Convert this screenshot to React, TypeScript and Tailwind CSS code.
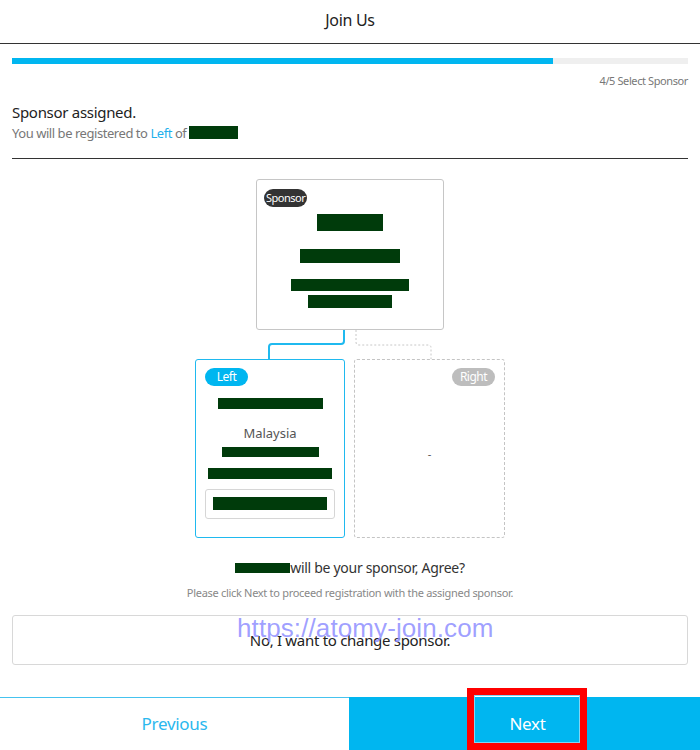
import { FC, ReactNode } from "react";

const Redact: FC<{ className: string }> = ({ className }) => (
  <div className={`bg-[#003b0b] ${className}`} />
);

const Badge: FC<{ color: string; children: ReactNode }> = ({ color, children }) => (
  <span
    className={`flex h-[18px] min-w-[43px] items-center justify-center rounded-full px-[2px] leading-none tracking-[-0.5px] text-white ${color}`}
  >
    {children}
  </span>
);

const Connectors: FC = () => (
  <svg width="308" height="29" viewBox="0 0 308 29" className="block">
    <path
      d="M148 0 V11 Q148 14 145 14 H76 Q73 14 73 17 V29"
      fill="none"
      stroke="#1fb9ef"
      strokeWidth="2"
    />
    <path
      d="M160 0 V12 Q160 15 163 15 H232 Q235 15 235 18 V29"
      fill="none"
      stroke="#c8c8c8"
      strokeWidth="1"
      strokeDasharray="2 2"
    />
  </svg>
);

export default function App() {
  return (
    <div className="relative flex h-[750px] w-[700px] flex-col bg-white font-['Noto_Sans',sans-serif] text-[#222]">
      <header className="flex h-[44px] shrink-0 items-center justify-center border-b border-[#333] pb-[4px]">
        <h1 className="text-[16px] tracking-[-0.3px]">Join Us</h1>
      </header>

      <main className="flex flex-1 flex-col px-3">
        <div className="mt-[14px] h-[6px] w-full bg-[#efefef]">
          <div className="h-full w-[80%] bg-[#00b6f0]" />
        </div>
        <p className="mt-[9px] text-right text-[11px] tracking-[-0.4px] text-[#777]">
          4/5 Select Sponsor
        </p>

        <h2 className="mt-[12px] text-[15px] leading-[20px] tracking-[-0.3px]">Sponsor assigned.</h2>
        <p className="flex items-center text-[13px] leading-[22px] tracking-[-0.45px] text-[#777]">
          You will be registered to&nbsp;<span className="text-[#1fb0ec]">Left</span>&nbsp;of&nbsp;
          <Redact className="h-[13px] w-[49px]" />
        </p>

        <div className="mt-[14px] h-px w-full bg-[#333]" />

        <div className="mt-[20px] flex flex-col items-center">
          <div className="flex h-[151px] w-[188px] flex-col items-center rounded-[3px] border border-[#c6c6c6] px-[7px] pt-[9px]">
            <div className="self-start text-[11px]">
              <Badge color="bg-[#333]">Sponsor</Badge>
            </div>
            <Redact className="mt-[7px] h-[17px] w-[66px]" />
            <Redact className="mt-[18px] h-[14px] w-[100px]" />
            <Redact className="mt-[16px] h-[12px] w-[118px]" />
            <Redact className="mt-[4px] h-[13px] w-[84px]" />
          </div>

          <Connectors />

          <div className="flex gap-[9px]">
            <div className="flex h-[179px] w-[150px] flex-col items-center rounded-[3px] border-[1.5px] border-[#1fb9ef] px-[9px] pt-[8px]">
              <div className="self-start text-[12px]">
                <Badge color="bg-[#00b6f0]">Left</Badge>
              </div>
              <Redact className="mt-[12px] h-[11px] w-[105px]" />
              <p className="mt-[14px] text-[13px] leading-[20px] text-[#555]">Malaysia</p>
              <Redact className="mt-[4px] h-[10px] w-[97px]" />
              <Redact className="mt-[11px] h-[11px] w-[124px]" />
              <div className="mt-[10px] flex h-[30px] w-full items-center justify-center rounded-[3px] border border-[#d6d6d6]">
                <Redact className="h-[13px] w-[114px]" />
              </div>
            </div>

            <div className="flex h-[179px] w-[151px] flex-col rounded-[3px] border border-dashed border-[#c4c4c4] px-[9px] pt-[8px]">
              <div className="self-end text-[12px]">
                <Badge color="bg-[#bdbdbd]">Right</Badge>
              </div>
              <p className="mt-[60px] text-center text-[11px] text-[#555]">-</p>
            </div>
          </div>
        </div>

        <p className="mt-[20px] flex items-center justify-center text-[14px] leading-[20px] tracking-[-0.3px] text-[#333]">
          <Redact className="h-[10px] w-[55px]" />
          will be your sponsor, Agree?
        </p>
        <p className="mt-[7px] text-center text-[11px] leading-[16px] tracking-[-0.3px] text-[#888]">
          Please click Next to proceed registration with the assigned sponsor.
        </p>

        <button className="relative mt-[14px] flex h-[50px] w-full items-center justify-center rounded-[3px] border border-[#d8d8d8] text-[15px] tracking-[-0.3px] text-[#222]">
          <span className="mt-[2px]">No, I want to change sponsor.</span>
          <span className="absolute left-[224px] top-[-3px] font-['Liberation_Sans',sans-serif] text-[26px] leading-[30px] tracking-[0.1px] text-[#8f8fff]/85">
            https://atomy-join.com
          </span>
        </button>
      </main>

      <footer className="flex h-[53px] shrink-0">
        <button className="flex w-[349px] items-center justify-center border-t-[1.5px] border-[#45c3ef] text-[17px] tracking-[-0.3px] text-[#2bb8ee]">
          Previous
        </button>
        <button className="flex flex-1 items-center justify-center bg-[#00b6f0] pl-[6px] text-[17px] tracking-[-0.3px] text-white">
          Next
        </button>
      </footer>

      <div className="pointer-events-none absolute left-[467px] top-[688px] h-[62px] w-[120px] border-[7px] border-[#ff0000]">
        <div className="h-full w-full border border-[#7fd6f5]" />
      </div>
    </div>
  );
}
